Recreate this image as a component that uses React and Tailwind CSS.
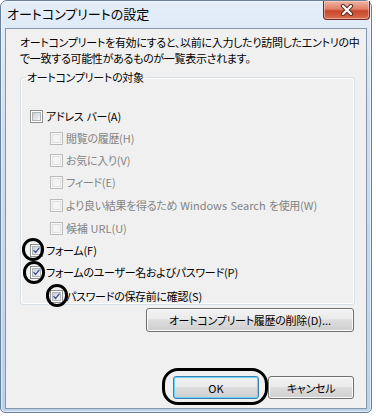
import { useState } from "react";

const font = "font-['Noto_Sans_CJK_JP','Noto_Sans',sans-serif] [font-feature-settings:'palt']";

const Latin = ({ children }) => <span className="tracking-normal">{children}</span>;

const CheckMark = () => (
  <svg width="9" height="9" viewBox="0 0 9 9" className="block">
    <path d="M1.2 4.6 L3.4 7 L7.8 1.4" fill="none" stroke="#3d5496" strokeWidth="1.7" strokeLinecap="round" strokeLinejoin="round" />
  </svg>
);

const Box = ({ checked, disabled }) => (
  <span
    className={
      "flex h-[13px] w-[13px] shrink-0 items-center justify-center border " +
      (disabled ? "border-[#bcbcbc] bg-[#f7f7f7]" : "border-[#8e8f8f] bg-white")
    }
  >
    <span
      className={
        "flex h-[9px] w-[9px] items-center justify-center " +
        (disabled
          ? "border border-[#e1e1e1] bg-[#f4f4f4]"
          : "border border-[#aeb3b9] bg-gradient-to-br from-[#cbcfd5] to-[#f6f6f6]")
      }
    >
      {checked ? <CheckMark /> : null}
    </span>
  </span>
);

const Row = ({ label, checked, disabled, nested, mark, className = "" }) => (
  <div className={"flex h-[16px] items-center " + (nested ? "pl-[29px] " : "pl-[9px] ") + className}>
    <span className="relative">
      <Box checked={checked} disabled={disabled} />
      {mark ? (
        <span className={"pointer-events-none absolute h-[23px] w-[22px] rounded-full border-[3px] border-black " + mark} />
      ) : null}
    </span>
    <span className={"ml-[3px] whitespace-nowrap " + (disabled ? "text-[#838383]" : "text-black")}>{label}</span>
  </div>
);

const Button = ({ children, focused, className = "" }) => (
  <button
    type="button"
    className={
      "flex items-center justify-center rounded-[3px] border bg-[linear-gradient(#f2f2f2,#ebebeb_45%,#dddddd_50%,#cfcfcf)] text-black " +
      (focused ? "border-[#3c7fb1] shadow-[inset_0_0_0_1px_#67d3fb]" : "border-[#707070] shadow-[inset_0_0_0_1px_#fbfbfb]") +
      " " +
      className
    }
  >
    {children}
  </button>
);

export default function App() {
  const [rows] = useState([
    { id: "a", label: <>アドレス バー<Latin>(A)</Latin></> },
    { id: "h", label: <>閲覧の履歴<Latin>(H)</Latin></>, disabled: true, nested: true, className: "mt-[6px]" },
    { id: "v", label: <>お気に入り<Latin>(V)</Latin></>, disabled: true, nested: true, className: "mt-[6px]" },
    { id: "e", label: <>フィード<Latin>(E)</Latin></>, disabled: true, nested: true, className: "mt-[6px]" },
    {
      id: "w",
      label: <>より良い結果を得るため <Latin>Windows Search</Latin> を使用<Latin>(W)</Latin></>,
      disabled: true,
      nested: true,
      className: "mt-[7px]"
    },
    { id: "u", label: <>候補 <Latin>URL(U)</Latin></>, disabled: true, nested: true, className: "mt-[7px]" },
    { id: "f", label: <>フォーム<Latin>(F)</Latin></>, checked: true, className: "mt-[6px]", mark: "-left-[8px] -top-[6px]" },
    { id: "p", label: <>フォームのユーザー名およびパスワード<Latin>(P)</Latin></>, checked: true, className: "mt-[6px]", mark: "-left-[7px] -top-[5px]" },
    { id: "s", label: <>パスワードの保存前に確認<Latin>(S)</Latin></>, checked: true, nested: true, className: "mt-[8px]", mark: "-left-[4px] -top-[6px]" }
  ]);

  return (
    <div className={"h-[416px] w-[376px] bg-white text-[11px] leading-[16px] tracking-[-0.3px] [word-spacing:1px] " + font}>
      <div className="flex h-[413px] w-[372px] flex-col rounded-t-[7px] rounded-b-[5px] border border-[#6a7f98] bg-[linear-gradient(#e4eef9,#cfdff1_30%,#b9d1ea)] shadow-[inset_0_0_0_1px_rgba(255,255,255,0.55)]">
        <div className="flex h-[27px] items-start justify-between pl-[6px] pr-[1px]">
          <span className="mt-[4px] text-[13px] leading-[18px] tracking-normal text-black">オートコンプリートの設定</span>
          <div className="flex h-[19px] w-[47px] items-center justify-center rounded-b-[4px] border border-t-0 border-[#6d2c22] bg-[linear-gradient(#efb5a6,#df8068_45%,#c8442a_55%,#d8704f)] shadow-[inset_0_0_0_1px_rgba(255,220,210,0.5)]">
            <svg width="14" height="12" viewBox="0 0 14 12">
              <path d="M3 2 L11 10 M11 2 L3 10" stroke="#5a2a22" strokeWidth="4.2" strokeLinecap="round" />
              <path d="M3 2 L11 10 M11 2 L3 10" stroke="#ffffff" strokeWidth="2.2" strokeLinecap="round" />
            </svg>
          </div>
        </div>
        <div className="mb-[3px] ml-[4px] mr-[4px] flex flex-1 flex-col border border-[#8497ad] bg-[#f0f0f0] pb-[9px] pl-[14px] pr-[12px] pt-[5px]">
          <p className="whitespace-nowrap text-black">
            オートコンプリートを有効にすると、以前に入力したり訪問したエントリの中
            <br />
            で一致する可能性があるものが一覧表示されます。
          </p>
          <fieldset className="mr-[-1px] mt-[3px] rounded-[3px] border border-[#d5dfe5] pb-0 pt-[23px] shadow-[inset_0_0_0_1px_#ffffff]">
            <legend className="ml-[5px] px-[1px] text-black">オートコンプリートの対象</legend>
            {rows.map((row) => (
              <Row key={row.id} {...row} />
            ))}
          </fieldset>
          <div className="mt-[3px] flex justify-end">
            <Button className="h-[24px] w-[208px]">
              オートコンプリート履歴の削除<Latin>(D)...</Latin>
            </Button>
          </div>
          <div className="mt-auto flex justify-end gap-[9px]">
            <div className="relative">
              <Button focused className="h-[23px] w-[86px]">
                <Latin>OK</Latin>
              </Button>
              <span className="pointer-events-none absolute -bottom-[6px] -left-[11px] -right-[9px] -top-[8px] rounded-[16px] border-[3px] border-black" />
            </div>
            <Button className="h-[23px] w-[86px]">キャンセル</Button>
          </div>
        </div>
      </div>
    </div>
  );
}
